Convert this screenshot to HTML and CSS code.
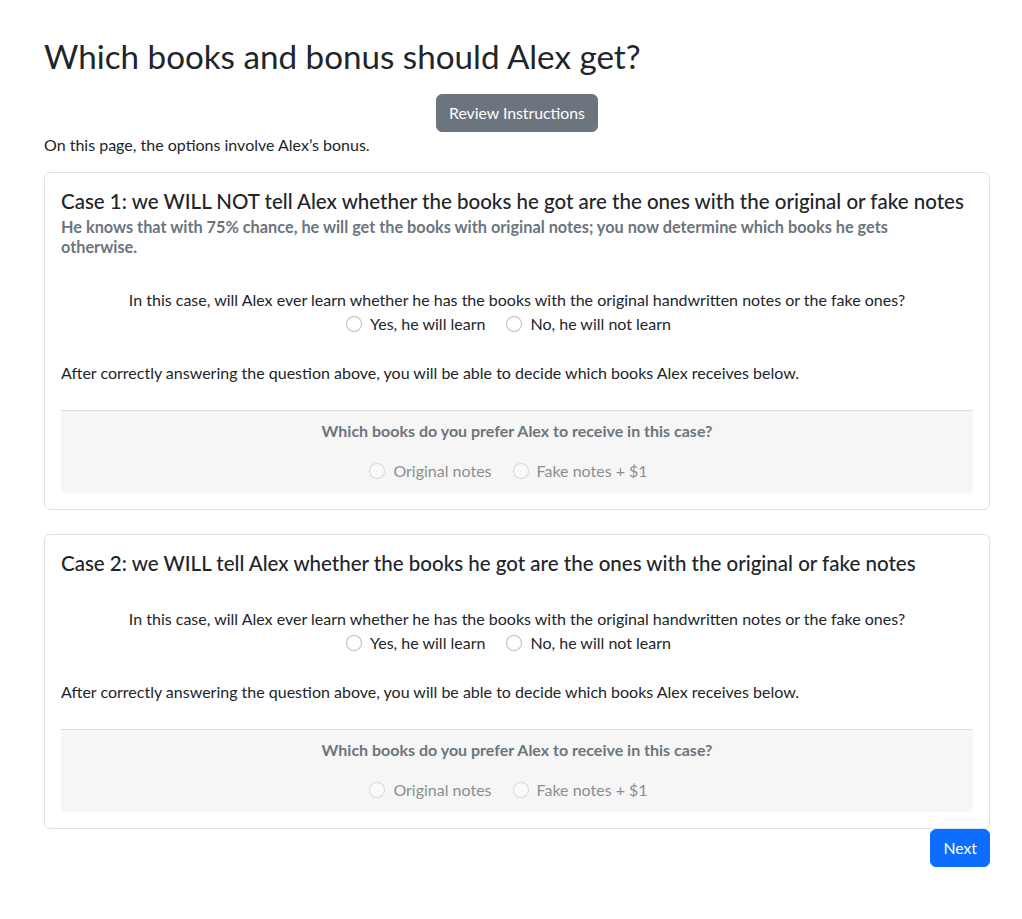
FILE: index.html
```html
<!DOCTYPE html>
<html lang="en">
<head>
<meta charset="utf-8">
<title>Which books and bonus should Alex get?</title>
<link rel="stylesheet" href="styles.css">
</head>
<body>
<main class="page">
  <h1 class="title">Which books and bonus should Alex get?</h1>
  <div class="center"><button class="btn btn-secondary">Review Instructions</button></div>
  <p class="intro">On this page, the options involve Alex’s bonus.</p>

  <section class="card">
    <h5 class="card-title">Case 1: we WILL NOT tell Alex whether the books he got are the ones with the original or fake notes</h5>
    <h6 class="card-sub">He knows that with 75% chance, he will get the books with original notes; you now determine which books he gets otherwise.</h6>
    <div class="question">
      <p class="q-text">In this case, will Alex ever learn whether he has the books with the original handwritten notes or the fake ones?</p>
      <div class="options">
        <label class="check"><span class="radio"></span>Yes, he will learn</label>
        <label class="check"><span class="radio"></span>No, he will not learn</label>
      </div>
    </div>
    <p class="after">After correctly answering the question above, you will be able to decide which books Alex receives below.</p>
    <div class="choice">
      <p class="choice-title">Which books do you prefer Alex to receive in this case?</p>
      <div class="options disabled">
        <label class="check"><span class="radio"></span>Original notes</label>
        <label class="check"><span class="radio"></span>Fake notes + $1</label>
      </div>
    </div>
  </section>

  <section class="card card-2">
    <h5 class="card-title">Case 2: we WILL tell Alex whether the books he got are the ones with the original or fake notes</h5>
    <div class="question">
      <p class="q-text">In this case, will Alex ever learn whether he has the books with the original handwritten notes or the fake ones?</p>
      <div class="options">
        <label class="check"><span class="radio"></span>Yes, he will learn</label>
        <label class="check"><span class="radio"></span>No, he will not learn</label>
      </div>
    </div>
    <p class="after">After correctly answering the question above, you will be able to decide which books Alex receives below.</p>
    <div class="choice">
      <p class="choice-title">Which books do you prefer Alex to receive in this case?</p>
      <div class="options disabled">
        <label class="check"><span class="radio"></span>Original notes</label>
        <label class="check"><span class="radio"></span>Fake notes + $1</label>
      </div>
    </div>
  </section>

  <div class="actions"><button class="btn btn-primary">Next</button></div>
</main>
</body>
</html>
```

FILE: styles.css
```css
* { box-sizing: border-box; }
html, body { margin: 0; padding: 0; background: #fff; }
body {
  font-family: Lato, "Open Sans", sans-serif;
  font-size: 16px;
  line-height: 24px;
  color: #212529;
}
.page {
  width: 946px;
  margin-left: 44px;
  padding-top: 34px;
}
.title {
  margin: 0 0 16px;
  font-size: 33.2px;
  font-weight: 400;
  line-height: 44px;
}
.center { text-align: center; }
.btn {
  font-family: inherit;
  font-size: 15.8px;
  line-height: 24px;
  padding: 6px 12px;
  border: 1px solid transparent;
  border-radius: 6px;
  color: #fff;
  cursor: pointer;
}
.btn-secondary { background: #6c757d; border-color: #6c757d; }
.btn-primary { background: #0d6efd; border-color: #0d6efd; }
.intro { margin: 1px 0 15px; }
.card {
  border: 1px solid #dee2e6;
  border-radius: 6px;
  padding: 16px;
  margin-bottom: 24px;
}
.card-2 { margin-bottom: 0; }
.card-title {
  margin: 0;
  font-size: 20.5px;
  font-weight: 500;
  line-height: 24px;
}
.card-sub {
  margin: 4px 0 0;
  max-width: 860px;
  font-size: 16.3px;
  font-weight: 700;
  line-height: 20px;
  color: #6c757d;
}
.question {
  margin-top: 31px;
  text-align: center;
}
.card-2 .question { margin-top: 32px; }
.q-text { margin: 0; }
.options {
  display: flex;
  justify-content: center;
}
.check {
  display: inline-flex;
  align-items: center;
  margin: 0 17px 0 0;
}
.check + .check { margin-left: 4px; }
.radio {
  width: 16px;
  height: 16px;
  border: 1px solid rgba(0,0,0,.25);
  border-radius: 50%;
  margin-right: 8px;
  background: #fff;
}
.after { margin: 25px 0 25px; }
.choice {
  background: #f6f6f6;
  border-top: 1px solid #dcdcdc;
  border-radius: 0 0 4px 4px;
  padding: 8px 0 10px;
  text-align: center;
}
.choice-title {
  margin: 0 0 16px;
  font-weight: 700;
  color: #6c757d;
}
.disabled .check { opacity: .5; }
.actions {
  display: flex;
  justify-content: flex-end;
}
```
